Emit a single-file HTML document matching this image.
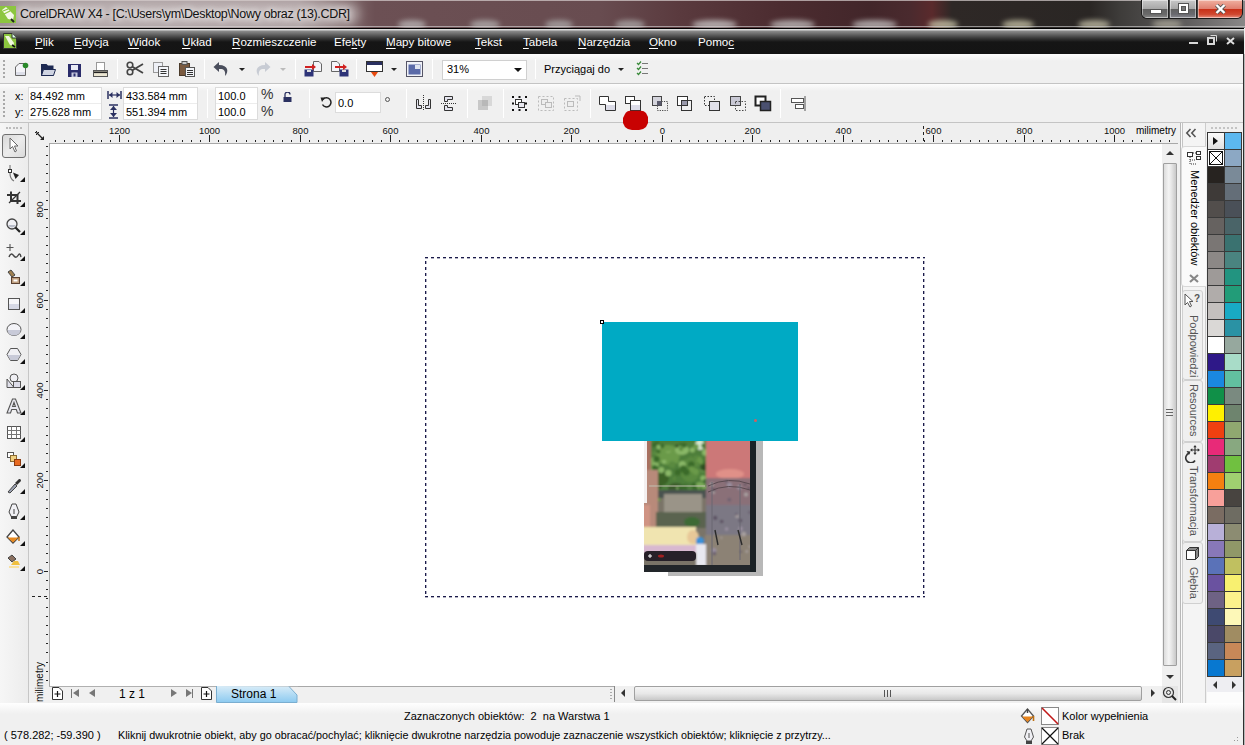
<!DOCTYPE html>
<html><head><meta charset="utf-8">
<style>
*{box-sizing:border-box;margin:0;padding:0}
html,body{width:1245px;height:745px;overflow:hidden;background:#f0f0f0;font-family:"Liberation Sans",sans-serif;color:#000}
.a{position:absolute}
#title{left:0;top:0;width:1245px;height:28px;overflow:hidden;background:linear-gradient(90deg,#9e9294 0px,#aa9ea0 150px,#a89a9c 300px,#806a6c 345px,#6c5054 375px,#684c50 600px,#5a3a3e 680px,#4c2c30 780px,#42262a 870px,#4a2a2e 910px,#5a2a2c 932px,#2e2826 952px,#2a2624 1090px,#3e3c3a 1120px,#5a5858 1180px,#8a8888 1245px)}
#ttext{left:20px;top:7px;font-size:12.5px;letter-spacing:-0.33px;color:#111;white-space:nowrap;text-shadow:0 0 6px #fff,0 0 8px #fff}
#menubar{left:0;top:28px;width:1244px;height:26px;background:linear-gradient(#000 0px,#000 1px,#e0e0e0 1px,#d8d8d8 2px,#8c8c8c 3px,#3a3a3a 10px,#151515 14px,#141414 26px)}
.mi{top:35px;font-size:11.6px;color:#fff;white-space:nowrap}
.mi u{text-decoration:underline;text-underline-offset:2px}
#tb1{left:0;top:54px;width:1243px;height:30px;background:linear-gradient(#fdfdfd,#f0f0f0 7px,#f0f0f0);border-bottom:1px solid #c4c4c4}
#tb2{left:0;top:84px;width:1243px;height:39px;background:linear-gradient(#fdfdfd,#f0f0f0 7px,#f0f0f0);border-bottom:1px solid #c4c4c4}
.sep{width:1px;background:#c8c8c8;border-right:1px solid #fff}
#toolbox{left:0;top:123px;width:29px;height:580px;background:linear-gradient(90deg,#f6f6f6,#f0f0f0 60%,#ececec);border-right:1px solid #c6c6c6}
#rtop{left:29px;top:123px;width:1151px;height:20px;background:#efefef}
#rleft{left:29px;top:143px;width:20px;height:543px;background:#efefef}
#canvas{left:49px;top:143px;width:1113px;height:543px;background:#fff;border-top:1px solid #a8a8a8;border-left:1px solid #a8a8a8}
#vscroll{left:1162px;top:143px;width:16px;height:559px;background:#f0f0f0}
#hnav{left:49px;top:686px;width:1113px;height:17px;background:#f0f0f0;border-top:1px solid #b0b0b0}
#docker{left:1178px;top:123px;width:29px;height:580px;background:linear-gradient(90deg,#f0f0f0 0 2px,#b8b8b8 2px 3px,#fafafa 3px 4px,#c4c4c4 4px 5px,#f4f4f4 5px 27px,#cccccc 27px 28px,#f0f0f0 28px)}
#palette{left:1207px;top:123px;width:36px;height:580px;background:linear-gradient(#f0f0f0 0 553px,#eeeef2 553px 569px,#fcfcfc 569px)}
#status{left:0;top:703px;width:1243px;height:42px;background:linear-gradient(#ffffff,#f8f8f8 5px,#f0f0f0 11px,#f0f0f0)}
#rborder{left:1243px;top:54px;width:2px;height:691px;background:linear-gradient(90deg,#2e2e2e 1px,#b8b8b8 1px)}
.st{font-size:11px;white-space:nowrap;color:#000}
.rt{font-size:10px;white-space:nowrap;color:#000}
</style></head><body>
<div id="title" class="a"><div class="a" style="left:398px;top:20px;width:28px;height:9px;border-radius:50%;background:#b8b4b4;filter:blur(2.5px);opacity:.8"></div><div class="a" style="left:470px;top:20px;width:30px;height:9px;border-radius:50%;background:#b0acac;filter:blur(2.5px);opacity:.8"></div><div class="a" style="left:545px;top:20px;width:28px;height:9px;border-radius:50%;background:#aaa6a6;filter:blur(2.5px);opacity:.8"></div><div class="a" style="left:615px;top:20px;width:30px;height:9px;border-radius:50%;background:#aaa6a6;filter:blur(2.5px);opacity:.8"></div><div class="a" style="left:692px;top:20px;width:45px;height:9px;border-radius:50%;background:#c8c4c4;filter:blur(2.5px);opacity:.8"></div><div class="a" style="left:770px;top:20px;width:45px;height:9px;border-radius:50%;background:#c0bcbc;filter:blur(2.5px);opacity:.8"></div><div class="a" style="left:852px;top:20px;width:45px;height:9px;border-radius:50%;background:#c0bcbc;filter:blur(2.5px);opacity:.8"></div><div class="a" style="left:928px;top:20px;width:30px;height:9px;border-radius:50%;background:#c8c4a8;filter:blur(2.5px);opacity:.8"></div><div class="a" style="left:1002px;top:20px;width:32px;height:9px;border-radius:50%;background:#c4c0a4;filter:blur(2.5px);opacity:.8"></div><div class="a" style="left:1078px;top:20px;width:32px;height:9px;border-radius:50%;background:#c0bca4;filter:blur(2.5px);opacity:.8"></div><div class="a" style="left:1152px;top:20px;width:30px;height:8px;border-radius:50%;background:#b8b4a4;filter:blur(2.5px);opacity:.7"></div><div class="a" style="left:0;top:0;width:1245px;height:1px;background:#d8d0d0;opacity:.7"></div><div class="a" style="left:0;top:26px;width:1245px;height:1px;background:#d8d8d8;opacity:.6"></div><div class="a" style="left:10px;top:2px;width:350px;height:24px;border-radius:12px;background:#cfc6c6;filter:blur(5px);opacity:.55"></div></div>
<div id="ttext" class="a">CorelDRAW X4 - [C:\Users\ym\Desktop\Nowy obraz (13).CDR]</div>
<div id="menubar" class="a"></div>
<div class="a mi" style="left:35px"><u>P</u>lik</div>
<div class="a mi" style="left:74px"><u>E</u>dycja</div>
<div class="a mi" style="left:128px"><u>W</u>idok</div>
<div class="a mi" style="left:182px"><u>U</u>kład</div>
<div class="a mi" style="left:232px"><u>R</u>ozmieszczenie</div>
<div class="a mi" style="left:334px">Efe<u>k</u>ty</div>
<div class="a mi" style="left:386px"><u>M</u>apy bitowe</div>
<div class="a mi" style="left:475px"><u>T</u>ekst</div>
<div class="a mi" style="left:523px"><u>T</u>abela</div>
<div class="a mi" style="left:578px"><u>N</u>arzędzia</div>
<div class="a mi" style="left:649px"><u>O</u>kno</div>
<div class="a mi" style="left:698px">Pomo<u>c</u></div>
<!-- title icon -->
<svg class="a" style="left:0;top:5px" width="17" height="19" viewBox="0 0 17 19">
<rect x="0" y="1" width="16" height="17" fill="#8cc63f"/>
<path d="M2 5 L6 2 L14 10 L13 15 L8 14 Z" fill="#f4f8e8"/>
<path d="M3 6 L8 4 M4 9 L10 6" stroke="#8cc63f" stroke-width="1.3"/>
<path d="M11 14 L14 17" stroke="#222" stroke-width="2"/>
</svg>
<!-- caption buttons -->
<div class="a" style="left:1141px;top:0;width:102px;height:19px;border:1px solid #1a1a1a;border-top:none;border-radius:0 0 6px 6px;overflow:hidden;background:#444">
 <div class="a" style="left:0;top:0;width:27px;height:18px;background:linear-gradient(#c8c8c8,#a8a8a8 48%,#606060 52%,#6a6a6a 80%,#8a8a8a);border-right:1px solid #222;box-shadow:inset 0 0 0 1px rgba(255,255,255,.45)"></div>
 <div class="a" style="left:28px;top:0;width:27px;height:18px;background:linear-gradient(#c8c8c8,#a8a8a8 48%,#606060 52%,#6a6a70 80%,#8a8a90);border-right:1px solid #222;box-shadow:inset 0 0 0 1px rgba(255,255,255,.45)"></div>
 <div class="a" style="left:56px;top:0;width:46px;height:18px;background:linear-gradient(#f0b0a0,#e08070 48%,#c83018 52%,#d04830 80%,#e89080);box-shadow:inset 0 0 0 1px rgba(255,255,255,.45)"></div>
 <div class="a" style="left:9px;top:10px;width:10px;height:3px;background:#fff;box-shadow:0 0 0 1px #555"></div>
 <div class="a" style="left:37px;top:4px;width:9px;height:9px;border:2px solid #fff;box-shadow:0 0 0 1px #555,inset 0 0 0 1px #555;background:#777"></div>
 <svg class="a" style="left:73px;top:4px" width="11" height="10" viewBox="0 0 11 10"><path d="M1.5 1 L9.5 9 M9.5 1 L1.5 9" stroke="#555" stroke-width="4"/><path d="M1.5 1 L9.5 9 M9.5 1 L1.5 9" stroke="#fff" stroke-width="2.4"/></svg>
</div>
<!-- menubar icon -->
<svg class="a" style="left:3px;top:33px" width="14" height="16" viewBox="0 0 14 16">
<path d="M0.5 0.5 H9 L13.5 5 V15.5 H0.5 Z" fill="#8cc63f" stroke="#333" stroke-width="1"/>
<path d="M9 0.5 V5 H13.5" fill="#dfe" stroke="#333" stroke-width="1"/>
<path d="M2 3 L6 3 L11 10 L10 13 L7 12 Z" fill="#f0f8e0"/>
<path d="M9 12 L12 14" stroke="#111" stroke-width="1.6"/>
</svg>
<!-- MDI buttons -->
<div class="a" style="left:1189px;top:42px;width:9px;height:2px;background:#d8d8d8"></div>
<svg class="a" style="left:1207px;top:35px" width="10" height="10" viewBox="0 0 10 10"><rect x="1" y="3" width="6" height="6" fill="none" stroke="#d8d8d8" stroke-width="2"/><path d="M3.5 0.5 H9.5 V6.5" fill="none" stroke="#d8d8d8" stroke-width="1"/></svg>
<svg class="a" style="left:1226px;top:37px" width="9" height="8" viewBox="0 0 9 8"><path d="M1 1 L8 7 M8 1 L1 7" stroke="#e0e0e0" stroke-width="2"/></svg>
<div id="tb1" class="a"></div>
<div id="tb2" class="a"></div>
<!-- toolbar 1 -->
<div class="a" style="left:3px;top:60px;width:2px;height:19px;background:repeating-linear-gradient(#a8a8a8 0 2px,transparent 2px 4px)"></div>
<svg class="a" style="left:14px;top:62px" width="16" height="15" viewBox="0 0 16 15">
<path d="M1.5 5 L5 1.5 H11.5 V13.5 H1.5 Z" fill="#f4f4f8" stroke="#666" stroke-width="1"/>
<path d="M2 10 H11 V13 H2 Z" fill="#dcdee8"/>
<circle cx="11.5" cy="3.5" r="2.8" fill="#2a8a2a"/>
</svg>
<svg class="a" style="left:41px;top:63px" width="15" height="14" viewBox="0 0 15 14">
<path d="M0 1 H5.5 L7 2.5 H12.5 V13 H0 Z" fill="#1e2a52"/>
<path d="M2.5 6.5 H14.5 L12.5 12.5 H0.5 Z" fill="#cfd4e2" stroke="#1e2a52" stroke-width="1"/>
</svg>
<svg class="a" style="left:68px;top:64px" width="13" height="13" viewBox="0 0 13 13">
<rect x="0" y="0" width="13" height="13" fill="#2a2c6a"/>
<rect x="3" y="1" width="7" height="5" fill="#e8eaf4"/>
<rect x="3.5" y="8.5" width="6" height="4.5" fill="#c8cae0"/>
<rect x="5.5" y="9.5" width="2" height="3" fill="#2a2c6a"/>
</svg>
<svg class="a" style="left:93px;top:62px" width="15" height="15" viewBox="0 0 15 15">
<rect x="3.5" y="0.5" width="8" height="8" fill="#fff" stroke="#999"/>
<rect x="0.5" y="8.5" width="14" height="6" fill="#ebe6d2" stroke="#555"/>
<rect x="1" y="9.5" width="13" height="1.6" fill="#222"/>
</svg>
<div class="a sep" style="left:117px;top:59px;height:20px"></div>
<svg class="a" style="left:126px;top:61px" width="18" height="15" viewBox="0 0 18 15">
<circle cx="4" cy="4" r="2.8" fill="none" stroke="#444" stroke-width="1.6"/>
<circle cx="4" cy="11" r="2.8" fill="none" stroke="#444" stroke-width="1.6"/>
<path d="M6 5.5 L17 12 M6 9.5 L17 3" stroke="#444" stroke-width="1.8"/>
</svg>
<svg class="a" style="left:153px;top:62px" width="16" height="15" viewBox="0 0 16 15">
<rect x="0.5" y="0.5" width="9" height="10" fill="#eef0f6" stroke="#999"/>
<rect x="5.5" y="4.5" width="10" height="10" fill="#f4f6fa" stroke="#666"/>
<path d="M7.5 7.5 H13.5 M7.5 9.5 H13.5 M7.5 11.5 H13.5" stroke="#333" stroke-width="1"/>
</svg>
<svg class="a" style="left:179px;top:61px" width="16" height="16" viewBox="0 0 16 16">
<rect x="0.5" y="2.5" width="10" height="12" fill="#7a5a40" stroke="#4a3a2a"/>
<rect x="3" y="0.5" width="5" height="3" fill="#ccc" stroke="#555"/>
<rect x="6.5" y="6.5" width="9" height="9" fill="#f4f6fa" stroke="#555"/>
<path d="M8 9.5 H14 M8 11.5 H14 M8 13.5 H14" stroke="#333" stroke-width="1"/>
</svg>
<div class="a sep" style="left:204px;top:59px;height:20px"></div>
<svg class="a" style="left:213px;top:61px" width="17" height="16" viewBox="0 0 17 16">
<path d="M6 1 L0.5 6 L6 11 V8 C10 7.5 13 9 12 15 C16 11 15.5 4 6 4 Z" fill="#4a4e5c"/>
</svg>
<div class="a" style="left:239px;top:68px;width:0;height:0;border-left:3px solid transparent;border-right:3px solid transparent;border-top:3px solid #222"></div>
<svg class="a" style="left:254px;top:61px" width="17" height="16" viewBox="0 0 17 16">
<path d="M11 1 L16.5 6 L11 11 V8 C7 7.5 4 9 5 15 C1 11 1.5 4 11 4 Z" fill="#c8ccd4"/>
</svg>
<div class="a" style="left:280px;top:68px;width:0;height:0;border-left:3px solid transparent;border-right:3px solid transparent;border-top:3px solid #bbb"></div>
<div class="a sep" style="left:295px;top:59px;height:20px"></div>
<svg class="a" style="left:304px;top:61px" width="18" height="16" viewBox="0 0 18 16">
<path d="M9.5 0.5 H15 L17.5 3 V10.5 H9.5 Z" fill="#f4f4f8" stroke="#666"/>
<rect x="0.5" y="8.5" width="9" height="7" fill="#2e3478"/>
<rect x="3" y="9" width="4" height="2" fill="#ddd"/>
<path d="M1 6 H10" stroke="#d02020" stroke-width="2"/><path d="M8 3 L12 6 L8 9 Z" fill="#d02020"/>
</svg>
<svg class="a" style="left:331px;top:61px" width="18" height="16" viewBox="0 0 18 16">
<path d="M0.5 0.5 H6 L8.5 3 V10.5 H0.5 Z" fill="#f4f4f8" stroke="#666"/>
<rect x="8.5" y="8.5" width="9" height="7" fill="#2e3478"/>
<rect x="11" y="9" width="4" height="2" fill="#ddd"/>
<path d="M4 6 H14" stroke="#d02020" stroke-width="2"/><path d="M12 3 L16 6 L12 9 Z" fill="#d02020"/>
</svg>
<div class="a sep" style="left:356px;top:59px;height:20px"></div>
<svg class="a" style="left:366px;top:61px" width="17" height="16" viewBox="0 0 17 16">
<rect x="0.5" y="0.5" width="16" height="10" fill="#fff" stroke="#333"/>
<rect x="1" y="1" width="15" height="3" fill="#2a3060"/>
<path d="M5 11 L8.5 16 L12 11 Z" fill="#e84a10"/>
</svg>
<div class="a" style="left:391px;top:68px;width:0;height:0;border-left:3px solid transparent;border-right:3px solid transparent;border-top:3px solid #222"></div>
<svg class="a" style="left:406px;top:61px" width="17" height="16" viewBox="0 0 17 16">
<rect x="0.5" y="0.5" width="16" height="15" fill="#f0f2f8" stroke="#556"/>
<rect x="2.5" y="3.5" width="12" height="10" fill="#5a6aa8"/>
<rect x="9" y="4" width="5" height="4" fill="#dfe4f0"/>
</svg>
<div class="a sep" style="left:432px;top:59px;height:20px"></div>
<div class="a" style="left:442px;top:60px;width:85px;height:20px;background:#fff;border:1px solid #d0d0d0"></div>
<div class="a st" style="left:447px;top:63px;font-size:11px">31%</div>
<div class="a" style="left:514px;top:68px;width:0;height:0;border-left:4px solid transparent;border-right:4px solid transparent;border-top:4px solid #111"></div>
<div class="a sep" style="left:535px;top:59px;height:20px"></div>
<div class="a st" style="left:544px;top:63px">Przyciągaj do</div>
<div class="a" style="left:618px;top:68px;width:0;height:0;border-left:3px solid transparent;border-right:3px solid transparent;border-top:3px solid #222"></div>
<svg class="a" style="left:636px;top:61px" width="13" height="15" viewBox="0 0 13 15">
<path d="M1 2 L2.5 3.5 L5 0.5 M1 7 L2.5 8.5 L5 5.5 M1 12 L2.5 13.5 L5 10.5" stroke="#3a8a3a" stroke-width="1.2" fill="none"/>
<path d="M6 2.5 H12 M6 7.5 H12 M6 12.5 H12" stroke="#777" stroke-width="1"/>
</svg>


<!-- property bar -->
<div class="a" style="left:3px;top:91px;width:2px;height:26px;background:repeating-linear-gradient(#a8a8a8 0 2px,transparent 2px 4px)"></div>
<div class="a st" style="left:15px;top:90px">x:</div>
<div class="a st" style="left:15px;top:106px">y:</div>
<div class="a" style="left:28px;top:87px;width:74px;height:33px;background:#fff;border:1px solid #dcdcdc"></div>
<div class="a" style="left:29px;top:103px;width:72px;height:1px;background:#ececec"></div>
<div class="a st" style="left:30px;top:90px">84.492 mm</div>
<div class="a st" style="left:30px;top:106px">275.628 mm</div>
<svg class="a" style="left:107px;top:90px" width="15" height="10" viewBox="0 0 15 10">
<path d="M1 1 V9 M14 1 V9" stroke="#2a3060" stroke-width="1.5"/>
<path d="M2 5 H13" stroke="#2a3060" stroke-width="1.2"/>
<path d="M2 5 L5.5 2 V8 Z M13 5 L9.5 2 V8 Z" fill="#2a3060"/>
</svg>
<svg class="a" style="left:108px;top:104px" width="11" height="15" viewBox="0 0 11 15">
<path d="M1 1 H10 M1 14 H10" stroke="#2a3060" stroke-width="1.5"/>
<path d="M5.5 2 V13" stroke="#2a3060" stroke-width="1.2"/>
<path d="M5.5 2 L2 6 H9 Z M5.5 13 L2 9 H9 Z" fill="#2a3060"/>
</svg>
<div class="a" style="left:123px;top:87px;width:75px;height:33px;background:#fff;border:1px solid #dcdcdc"></div>
<div class="a" style="left:124px;top:103px;width:73px;height:1px;background:#ececec"></div>
<div class="a st" style="left:126px;top:90px">433.584 mm</div>
<div class="a st" style="left:126px;top:106px">551.394 mm</div>
<div class="a sep" style="left:207px;top:89px;height:29px"></div>
<div class="a" style="left:215px;top:87px;width:43px;height:33px;background:#fff;border:1px solid #dcdcdc"></div>
<div class="a" style="left:216px;top:103px;width:41px;height:1px;background:#ececec"></div>
<div class="a st" style="left:218px;top:90px">100.0</div>
<div class="a st" style="left:218px;top:106px">100.0</div>
<div class="a st" style="left:261px;top:86px;font-size:14px;color:#333">%</div>
<div class="a st" style="left:261px;top:103px;font-size:14px;color:#333">%</div>
<svg class="a" style="left:283px;top:92px" width="9" height="10" viewBox="0 0 9 10">
<path d="M2 5 V2.5 A2.5 2.5 0 0 1 7 2.5" fill="none" stroke="#2a3060" stroke-width="1.3"/>
<rect x="0.5" y="5" width="8" height="5" fill="#2a3060"/>
</svg>
<div class="a sep" style="left:309px;top:89px;height:29px"></div>
<svg class="a" style="left:320px;top:96px" width="12" height="12" viewBox="0 0 12 12">
<path d="M3 3.5 A4.5 4.5 0 1 1 2.5 8.5" fill="none" stroke="#222" stroke-width="1.5"/>
<path d="M0.5 1.5 L5 1.5 L2 6 Z" fill="#222"/>
</svg>
<div class="a" style="left:335px;top:92px;width:46px;height:21px;background:#fff;border:1px solid #dcdcdc"></div>
<div class="a st" style="left:338px;top:97px">0.0</div>
<div class="a" style="left:385px;top:97px;width:5px;height:5px;border:1px solid #555;border-radius:50%"></div>
<div class="a sep" style="left:406px;top:89px;height:29px"></div>
<svg class="a" style="left:415px;top:95px" width="17" height="16" viewBox="0 0 17 16">
<path d="M8.5 0 V16" stroke="#333" stroke-width="1" stroke-dasharray="1 1"/>
<path d="M1.5 4.5 H3.5 V10.5 H6.5 V13.5 H1.5 Z" fill="#e4e4ee" stroke="#333"/>
<path d="M15.5 4.5 H13.5 V10.5 H10.5 V13.5 H15.5 Z" fill="#e4e4ee" stroke="#333"/>
</svg>
<svg class="a" style="left:441px;top:95px" width="17" height="16" viewBox="0 0 17 16">
<path d="M0 8.5 H16" stroke="#333" stroke-width="1" stroke-dasharray="1 1"/>
<path d="M3.5 1.5 H11.5 V4.5 H6.5 V6.5 H3.5 Z" fill="#e4e4ee" stroke="#333"/>
<path d="M3.5 15.5 H11.5 V12.5 H6.5 V10.5 H3.5 Z" fill="#e4e4ee" stroke="#333"/>
</svg>
<div class="a sep" style="left:467px;top:89px;height:29px"></div>
<svg class="a" style="left:477px;top:95px" width="16" height="16" viewBox="0 0 16 16">
<rect x="1" y="5" width="10" height="10" fill="#c8c8c8"/>
<rect x="5" y="1" width="10" height="10" fill="#d8d8d8"/>
<rect x="5" y="5" width="6" height="6" fill="#b8b8b8"/>
</svg>
<div class="a sep" style="left:503px;top:89px;height:29px"></div>
<svg class="a" style="left:511px;top:95px" width="18" height="17" viewBox="0 0 18 17">
<rect x="1.5" y="1.5" width="14" height="14" fill="#f4f4f8" opacity=".6"/>
<path d="M1 1 h2 v2 h-2z M7.5 1 h2 v2 h-2z M14 1 h2 v2 h-2z M1 7.5 h2 v2 h-2z M14 7.5 h2 v2 h-2z M1 14 h2 v2 h-2z M7.5 14 h2 v2 h-2z M14 14 h2 v2 h-2z" fill="#111"/>
<rect x="4.5" y="4.5" width="6" height="5" fill="#fff" stroke="#333"/>
<rect x="7.5" y="7.5" width="6" height="5" fill="#e8e8f0" stroke="#333"/>
</svg>
<svg class="a" style="left:537px;top:95px" width="18" height="17" viewBox="0 0 18 17">
<rect x="1.5" y="1.5" width="15" height="14" fill="none" stroke="#bbb" stroke-dasharray="2 2"/>
<rect x="4.5" y="4.5" width="6" height="5" fill="#eee" stroke="#bbb"/>
<rect x="8.5" y="7.5" width="6" height="5" fill="#eee" stroke="#bbb"/>
</svg>
<svg class="a" style="left:563px;top:95px" width="18" height="17" viewBox="0 0 18 17">
<rect x="1.5" y="3.5" width="13" height="12" fill="none" stroke="#bbb" stroke-dasharray="2 2"/>
<rect x="4.5" y="6.5" width="6" height="5" fill="#eee" stroke="#bbb"/>
<path d="M12 1 L17 1 L17 6" fill="none" stroke="#bbb"/>
</svg>
<div class="a sep" style="left:590px;top:89px;height:29px"></div>
<svg class="a" style="left:598px;top:95px" width="19" height="17" viewBox="0 0 19 17">
<path d="M1.5 1.5 H10.5 V6.5 H17.5 V15.5 H7.5 V9.5 H1.5 Z" fill="#fff" stroke="#333"/>
<rect x="8" y="10" width="9" height="5" fill="#dcdce8"/>
</svg>
<svg class="a" style="left:624px;top:95px" width="18" height="17" viewBox="0 0 18 17">
<rect x="1.5" y="1.5" width="9" height="7" fill="#fff" stroke="#333"/>
<rect x="6.5" y="5.5" width="10" height="10" fill="#fff" stroke="#333"/>
<rect x="7" y="10" width="9" height="5" fill="#dcdce8"/>
</svg>
<svg class="a" style="left:651px;top:95px" width="18" height="17" viewBox="0 0 18 17">
<path d="M10.5 6.5 H16.5 V15.5 H6.5 V10.5" fill="none" stroke="#444" stroke-dasharray="1.2 1.2"/>
<rect x="1.5" y="1.5" width="9" height="9" fill="#d4d4dc" stroke="#444"/>
<rect x="6" y="6" width="4.5" height="4.5" fill="#5a5a6c"/>
</svg>
<svg class="a" style="left:676px;top:95px" width="18" height="17" viewBox="0 0 18 17">
<rect x="1.5" y="1.5" width="10" height="9" fill="#fff" stroke="#333"/>
<rect x="5.5" y="5.5" width="10" height="10" fill="none" stroke="#333"/>
<rect x="6" y="6" width="5" height="4" fill="#99a"/>
</svg>
<svg class="a" style="left:703px;top:95px" width="18" height="17" viewBox="0 0 18 17">
<rect x="1.5" y="1.5" width="10" height="9" fill="none" stroke="#333" stroke-dasharray="1.5 1.5"/>
<rect x="6.5" y="6.5" width="10" height="9" fill="#e0e0ea" stroke="#333"/>
</svg>
<svg class="a" style="left:729px;top:95px" width="18" height="17" viewBox="0 0 18 17">
<rect x="1.5" y="1.5" width="10" height="9" fill="#c8c8d4" stroke="#444"/>
<rect x="6.5" y="6.5" width="10" height="9" fill="none" stroke="#444" stroke-dasharray="1.5 1.5"/>
</svg>
<svg class="a" style="left:754px;top:95px" width="18" height="17" viewBox="0 0 18 17">
<rect x="1.5" y="1.5" width="10" height="9" fill="#fff" stroke="#222" stroke-width="2"/>
<rect x="6.5" y="6.5" width="10" height="9" fill="#4a5070" stroke="#222" stroke-width="1.5"/>
</svg>
<div class="a sep" style="left:780px;top:89px;height:29px"></div>
<svg class="a" style="left:790px;top:96px" width="16" height="15" viewBox="0 0 16 15">
<path d="M15 0 V15" stroke="#555"/>
<rect x="1.5" y="2.5" width="12" height="4" fill="#fff" stroke="#555"/>
<rect x="5.5" y="8.5" width="8" height="4" fill="#fff" stroke="#555"/>
</svg>


<div id="toolbox" class="a"></div>
<div class="a" style="left:6px;top:127px;width:17px;height:2px;background:repeating-linear-gradient(90deg,#bcbcbc 0 2px,transparent 2px 3.5px)"></div>
<div class="a" style="left:2px;top:134px;width:24px;height:24px;border:1px solid #707070;border-radius:3px;background:linear-gradient(135deg,#d8d8d8,#ececec 50%,#dadada)"></div>
<svg class="a" style="left:9px;top:137px" width="10" height="16" viewBox="0 0 10 16"><path d="M1 1 V12 L3.5 9.5 L6 15 L7.5 14 L5.5 9 H9 Z" fill="#fff" stroke="#666" stroke-width="1"/></svg>
<svg class="a" style="left:6px;top:165px" width="16" height="17" viewBox="0 0 16 17"><path d="M4 0 V4" stroke="#666" stroke-width="1"/><rect x="2.5" y="4.5" width="3" height="3" fill="#fff" stroke="#333"/><path d="M4 8 Q4 14 8 16" fill="none" stroke="#777" stroke-width="1.2"/><path d="M7 7.5 L13 10 L9.5 14 Z" fill="#222"/></svg>
<div class="a" style="left:20px;top:177px;width:0;height:0;border-left:5px solid transparent;border-bottom:5px solid #111"></div>
<svg class="a" style="left:6px;top:190px" width="16" height="17" viewBox="0 0 16 17"><path d="M1 5 H11.5 V14 M5 1.5 V11 H15" fill="none" stroke="#333" stroke-width="2"/><path d="M3 13 L14 2" stroke="#333" stroke-width="1.3"/></svg>
<div class="a" style="left:20px;top:202px;width:0;height:0;border-left:5px solid transparent;border-bottom:5px solid #111"></div>
<svg class="a" style="left:6px;top:218px" width="16" height="17" viewBox="0 0 16 17"><circle cx="6" cy="6" r="5" fill="#f0f0f4" stroke="#444" stroke-width="1.3"/><path d="M2 7 A4.5 4.5 0 0 0 10 7 Z" fill="#b8bcc8"/><path d="M9.5 9.5 L14 14" stroke="#222" stroke-width="2.2"/></svg>
<div class="a" style="left:20px;top:230px;width:0;height:0;border-left:5px solid transparent;border-bottom:5px solid #111"></div>
<svg class="a" style="left:6px;top:244px" width="16" height="17" viewBox="0 0 16 17"><path d="M4 0 V7 M0.5 3.5 H7.5" stroke="#555" stroke-width="1.1"/><path d="M3 13 Q5 8 7.5 11.5 T12 11.5 T15 13" fill="none" stroke="#444" stroke-width="1.4"/></svg>
<div class="a" style="left:20px;top:256px;width:0;height:0;border-left:5px solid transparent;border-bottom:5px solid #111"></div>
<svg class="a" style="left:6px;top:269px" width="16" height="17" viewBox="0 0 16 17"><path d="M2 3 L5 1 L9 6 L6 8 Z" fill="#a08050" stroke="#444"/><rect x="5.5" y="8.5" width="8" height="6" fill="#c0a080" stroke="#5a4030"/><rect x="7.5" y="10.5" width="4" height="2" fill="#fff"/></svg>
<div class="a" style="left:20px;top:281px;width:0;height:0;border-left:5px solid transparent;border-bottom:5px solid #111"></div>
<svg class="a" style="left:6px;top:296px" width="16" height="17" viewBox="0 0 16 17"><rect x="2.5" y="2.5" width="11" height="11" fill="#f6f6f8" stroke="#555"/><rect x="3" y="8" width="10" height="5" fill="#d6d8e4"/></svg>
<div class="a" style="left:20px;top:308px;width:0;height:0;border-left:5px solid transparent;border-bottom:5px solid #111"></div>
<svg class="a" style="left:6px;top:322px" width="16" height="17" viewBox="0 0 16 17"><ellipse cx="8" cy="7.5" rx="7" ry="6" fill="#f4f4f8" stroke="#555"/><path d="M1.5 8 A6.5 5.5 0 0 0 14.5 8 Z" fill="#c8cad8"/></svg>
<div class="a" style="left:20px;top:334px;width:0;height:0;border-left:5px solid transparent;border-bottom:5px solid #111"></div>
<svg class="a" style="left:6px;top:347px" width="16" height="17" viewBox="0 0 16 17"><path d="M4.5 1.5 H11.5 L15 7.5 L11.5 13.5 H4.5 L1 7.5 Z" fill="#f0f0f4" stroke="#555"/><path d="M1.5 8 L4.5 13 H11.5 L14.5 8 Z" fill="#c8cad8"/></svg>
<div class="a" style="left:20px;top:359px;width:0;height:0;border-left:5px solid transparent;border-bottom:5px solid #111"></div>
<svg class="a" style="left:6px;top:373px" width="16" height="17" viewBox="0 0 16 17"><circle cx="8" cy="5" r="4" fill="#f0f0f4" stroke="#555"/><path d="M1 14.5 V6 L8 14.5 Z" fill="#e0e0ea" stroke="#555"/><rect x="7.5" y="8.5" width="7" height="6" fill="#dcdce8" stroke="#555"/></svg>
<div class="a" style="left:20px;top:385px;width:0;height:0;border-left:5px solid transparent;border-bottom:5px solid #111"></div>
<svg class="a" style="left:6px;top:398px" width="16" height="17" viewBox="0 0 16 17"><path d="M1 15 L6.5 1 H9.5 L15 15 H11.5 L10.3 11.5 H5.7 L4.5 15 Z M6.6 8.5 H9.4 L8 4.5 Z" fill="#e8e8f0" stroke="#555" stroke-width="1.1"/></svg>
<div class="a" style="left:20px;top:410px;width:0;height:0;border-left:5px solid transparent;border-bottom:5px solid #111"></div>
<svg class="a" style="left:6px;top:425px" width="16" height="17" viewBox="0 0 16 17"><rect x="1.5" y="1.5" width="13" height="12" fill="#fff" stroke="#555"/><path d="M1.5 5.5 H14.5 M1.5 9.5 H14.5 M5.5 1.5 V13.5 M10.5 1.5 V13.5" stroke="#777"/></svg>
<div class="a" style="left:20px;top:437px;width:0;height:0;border-left:5px solid transparent;border-bottom:5px solid #111"></div>
<svg class="a" style="left:6px;top:451px" width="16" height="17" viewBox="0 0 16 17"><rect x="1.5" y="1.5" width="6" height="5" fill="#fff" stroke="#555"/><rect x="4.5" y="4.5" width="6" height="6" fill="#f0d080" stroke="#8a6a30"/><rect x="8.5" y="8.5" width="6" height="6" fill="#e86a20" stroke="#8a3a10"/></svg>
<div class="a" style="left:20px;top:463px;width:0;height:0;border-left:5px solid transparent;border-bottom:5px solid #111"></div>
<svg class="a" style="left:6px;top:477px" width="16" height="17" viewBox="0 0 16 17"><path d="M2 15 L9 7 L11 9 L4 16 Z" fill="#9aa0b0" stroke="#444"/><path d="M9 6 L13 2 A1.8 1.8 0 0 1 15 4 L11 8 Z" fill="#333"/></svg>
<div class="a" style="left:20px;top:489px;width:0;height:0;border-left:5px solid transparent;border-bottom:5px solid #111"></div>
<svg class="a" style="left:6px;top:503px" width="16" height="17" viewBox="0 0 16 17"><path d="M6 1 H10 L13 9 L10 15 H6 L3 9 Z" fill="#f0f0f4" stroke="#444"/><path d="M8 6 V11" stroke="#444"/><rect x="5" y="13" width="6" height="3" fill="#444"/></svg>
<div class="a" style="left:20px;top:515px;width:0;height:0;border-left:5px solid transparent;border-bottom:5px solid #111"></div>
<svg class="a" style="left:6px;top:529px" width="16" height="17" viewBox="0 0 16 17"><path d="M7 1 L1 8 L7 14 L13 8 Z" fill="#fff" stroke="#444" stroke-width="1.3"/><path d="M1.5 8.5 L7 13.5 L12.5 8.5 Z" fill="#e88a20"/><path d="M13 8 V12" stroke="#c07010" stroke-width="1.5"/></svg>
<div class="a" style="left:20px;top:541px;width:0;height:0;border-left:5px solid transparent;border-bottom:5px solid #111"></div>
<svg class="a" style="left:6px;top:554px" width="16" height="17" viewBox="0 0 16 17"><path d="M2 4 L6 1 L10 5 L6 8 Z" fill="#8a7060" stroke="#444"/><path d="M5 11 H14 L12 7 H8 Z" fill="#f0c040"/><path d="M3 13 H13" stroke="#f8e0a0" stroke-width="2"/></svg>
<div class="a" style="left:20px;top:566px;width:0;height:0;border-left:5px solid transparent;border-bottom:5px solid #111"></div>
<div id="rtop" class="a"></div>
<div id="rleft" class="a"></div>
<div id="canvas" class="a"></div>
<div class="a" style="left:425px;top:257px;width:500px;height:1px;background:repeating-linear-gradient(90deg,#1a1a4a 0 3px,transparent 3px 6px);opacity:1"></div>
<div class="a" style="left:425px;top:258px;width:500px;height:1px;background:repeating-linear-gradient(90deg,#1a1a4a 0 3px,transparent 3px 6px);opacity:0.35"></div>
<div class="a" style="left:425px;top:596px;width:500px;height:1px;background:repeating-linear-gradient(90deg,#1a1a4a 0 3px,transparent 3px 6px);opacity:1"></div>
<div class="a" style="left:425px;top:597px;width:500px;height:1px;background:repeating-linear-gradient(90deg,#1a1a4a 0 3px,transparent 3px 6px);opacity:0.35"></div>
<div class="a" style="left:425px;top:261px;width:1px;height:336px;background:repeating-linear-gradient(#1a1a4a 0 3px,transparent 3px 6px);opacity:1"></div>
<div class="a" style="left:426px;top:261px;width:1px;height:336px;background:repeating-linear-gradient(#1a1a4a 0 3px,transparent 3px 6px);opacity:0.35"></div>
<div class="a" style="left:923px;top:261px;width:1px;height:336px;background:repeating-linear-gradient(#1a1a4a 0 3px,transparent 3px 6px);opacity:1"></div>
<div class="a" style="left:924px;top:261px;width:1px;height:336px;background:repeating-linear-gradient(#1a1a4a 0 3px,transparent 3px 6px);opacity:0.35"></div>
<div class="a" style="left:668px;top:441px;width:95px;height:135px;background:#b8b8b8"></div>
<svg class="a" style="left:644px;top:441px" width="112" height="131" viewBox="644 441 112 131">
<defs><filter id="bl" x="-5%" y="-5%" width="110%" height="110%"><feGaussianBlur stdDeviation="1.0"/></filter>
<filter id="bl2"><feGaussianBlur stdDeviation="0.6"/></filter>
<clipPath id="pc"><rect x="644" y="441" width="112" height="131"/></clipPath></defs>
<g clip-path="url(#pc)">
<rect x="644" y="441" width="112" height="131" fill="#7a7468"/>
<g filter="url(#bl)">
<rect x="640" y="436" width="68" height="62" fill="#4e7e3a"/>
<ellipse cx="668" cy="455" rx="12" ry="10" fill="#6a9a48"/>
<ellipse cx="690" cy="470" rx="10" ry="12" fill="#5a8a40"/>
<ellipse cx="660" cy="478" rx="9" ry="8" fill="#3a6228"/>
<ellipse cx="682" cy="450" rx="7" ry="5" fill="#8ab868"/>
<ellipse cx="700" cy="488" rx="6" ry="6" fill="#7aaa58"/>
<ellipse cx="676" cy="488" rx="8" ry="5" fill="#3a5a2a"/>
<ellipse cx="700" cy="445" rx="5" ry="5" fill="#d8e8d0"/>
<ellipse cx="654" cy="465" rx="5" ry="8" fill="#7aa858"/>
<circle cx="668.1" cy="449.9" r="2.8" fill="#8ab868"/><circle cx="696.0" cy="446.6" r="2.7" fill="#6a9a48"/><circle cx="662.0" cy="446.1" r="2.3" fill="#3a6a2a"/><circle cx="655.1" cy="466.0" r="3.2" fill="#8ab868"/><circle cx="703.1" cy="478.2" r="2.7" fill="#8ab868"/><circle cx="682.3" cy="464.4" r="3.5" fill="#8ab868"/><circle cx="681.2" cy="448.9" r="2.3" fill="#6a9a48"/><circle cx="656.6" cy="459.2" r="3.1" fill="#3a6a2a"/><circle cx="655.8" cy="474.7" r="1.9" fill="#8ab868"/><circle cx="680.7" cy="444.7" r="1.6" fill="#3a6a2a"/><circle cx="677.8" cy="472.4" r="3.1" fill="#3a6a2a"/><circle cx="682.8" cy="467.7" r="2.1" fill="#4a7a38"/><circle cx="660.1" cy="487.0" r="1.7" fill="#2e5020"/><circle cx="679.4" cy="492.6" r="3.0" fill="#2e5020"/><circle cx="684.1" cy="445.3" r="2.5" fill="#3a6a2a"/><circle cx="692.4" cy="450.0" r="2.5" fill="#8ab868"/><circle cx="703.9" cy="445.6" r="2.6" fill="#4a7a38"/><circle cx="699.0" cy="459.5" r="2.9" fill="#6a9a48"/><circle cx="677.8" cy="488.0" r="1.6" fill="#8ab868"/><circle cx="702.9" cy="469.0" r="2.8" fill="#8ab868"/><circle cx="690.9" cy="459.3" r="2.7" fill="#5a8a40"/><circle cx="696.0" cy="457.8" r="2.3" fill="#5a8a40"/><circle cx="669.4" cy="496.5" r="2.2" fill="#6a9a48"/><circle cx="656.6" cy="444.5" r="3.0" fill="#3a6a2a"/><circle cx="691.3" cy="464.5" r="3.3" fill="#3a6a2a"/><circle cx="654.5" cy="467.5" r="2.6" fill="#3a6a2a"/><circle cx="695.9" cy="492.0" r="2.1" fill="#3a6a2a"/><circle cx="705.2" cy="481.3" r="2.3" fill="#3a6a2a"/><circle cx="658.5" cy="451.4" r="2.0" fill="#3a6a2a"/><circle cx="650.7" cy="490.0" r="1.9" fill="#2e5020"/><circle cx="650.2" cy="465.7" r="2.2" fill="#6a9a48"/><circle cx="667.8" cy="448.4" r="3.2" fill="#6a9a48"/><circle cx="686.7" cy="484.6" r="2.4" fill="#4a7a38"/><circle cx="693.7" cy="492.6" r="3.1" fill="#3a6a2a"/><circle cx="672.3" cy="464.3" r="2.5" fill="#3a6a2a"/><circle cx="653.5" cy="445.0" r="1.9" fill="#3a6a2a"/><circle cx="656.2" cy="476.4" r="1.7" fill="#6a9a48"/><circle cx="658.5" cy="447.0" r="2.2" fill="#8ab868"/><circle cx="653.9" cy="453.3" r="2.3" fill="#5a8a40"/><circle cx="664.1" cy="461.5" r="2.2" fill="#8ab868"/><circle cx="656.5" cy="469.8" r="3.5" fill="#3a6a2a"/><circle cx="677.1" cy="446.1" r="1.7" fill="#2e5020"/><circle cx="691.5" cy="469.2" r="2.9" fill="#6a9a48"/><circle cx="651.3" cy="497.1" r="2.6" fill="#3a6a2a"/><circle cx="688.6" cy="494.9" r="3.0" fill="#2e5020"/><circle cx="704.8" cy="491.9" r="2.9" fill="#2e5020"/><circle cx="679.0" cy="494.6" r="2.2" fill="#3a6a2a"/><circle cx="679.8" cy="487.0" r="2.2" fill="#3a6a2a"/><circle cx="684.3" cy="487.5" r="3.0" fill="#3a6a2a"/><circle cx="695.1" cy="489.3" r="3.0" fill="#3a6a2a"/><circle cx="661.2" cy="470.1" r="3.0" fill="#8ab868"/><circle cx="694.2" cy="468.9" r="1.9" fill="#6a9a48"/><circle cx="703.6" cy="467.4" r="3.4" fill="#2e5020"/><circle cx="703.5" cy="462.5" r="1.9" fill="#3a6a2a"/><circle cx="676.3" cy="460.9" r="2.5" fill="#6a9a48"/><circle cx="697.1" cy="469.3" r="2.8" fill="#4a7a38"/><circle cx="686.0" cy="490.2" r="1.7" fill="#3a6a2a"/><circle cx="693.8" cy="485.3" r="2.5" fill="#3a6a2a"/><circle cx="674.3" cy="478.5" r="1.7" fill="#5a8a40"/><circle cx="672.2" cy="464.7" r="3.4" fill="#5a8a40"/><circle cx="658.9" cy="499.6" r="1.6" fill="#6a9a48"/><circle cx="700.7" cy="488.6" r="1.8" fill="#4a7a38"/><circle cx="683.4" cy="469.0" r="3.4" fill="#3a6a2a"/><circle cx="680.7" cy="448.7" r="1.5" fill="#5a8a40"/><circle cx="686.4" cy="472.1" r="3.4" fill="#3a6a2a"/><circle cx="705.2" cy="452.5" r="3.2" fill="#8ab868"/><circle cx="664.1" cy="458.3" r="2.0" fill="#6a9a48"/><circle cx="668.3" cy="473.1" r="3.2" fill="#8ab868"/><circle cx="701.0" cy="461.9" r="2.4" fill="#6a9a48"/><circle cx="695.6" cy="471.5" r="3.2" fill="#6a9a48"/><rect x="640" y="436" width="11" height="40" fill="#a87060"/>
<rect x="706" y="436" width="50" height="45" fill="#cc7878"/>
<ellipse cx="730" cy="474" rx="14" ry="5" fill="#e09088"/>
<rect x="706" y="478" width="50" height="30" fill="#8a7078"/>
<rect x="706" y="505" width="50" height="32" fill="#7c7884"/>
<rect x="705" y="535" width="50" height="32" fill="#8c8274"/>
<circle cx="713.5" cy="492.1" r="1.8" fill="#a8a0a0"/><circle cx="740.6" cy="528.7" r="2.2" fill="#9a90a0"/><circle cx="715.2" cy="517.9" r="2.1" fill="#5a5060"/><circle cx="721.7" cy="521.5" r="1.8" fill="#5a5060"/><circle cx="745.1" cy="484.5" r="1.3" fill="#5a5060"/><circle cx="740.4" cy="520.6" r="1.8" fill="#5a5060"/><circle cx="726.6" cy="529.0" r="1.8" fill="#9a90a0"/><circle cx="737.1" cy="516.2" r="1.8" fill="#a8a0a0"/><circle cx="729.3" cy="499.8" r="1.8" fill="#6a6070"/><circle cx="746.8" cy="551.4" r="1.3" fill="#a8a0a0"/><circle cx="713.8" cy="489.7" r="1.7" fill="#5a5060"/><circle cx="736.2" cy="514.3" r="1.3" fill="#6a6070"/><circle cx="740.9" cy="551.8" r="1.2" fill="#6a6070"/><circle cx="714.0" cy="550.6" r="2.5" fill="#9a90a0"/><circle cx="739.4" cy="487.5" r="2.3" fill="#9a90a0"/><circle cx="749.6" cy="546.6" r="1.2" fill="#a8a0a0"/><circle cx="749.8" cy="512.3" r="1.6" fill="#6a6070"/><circle cx="721.4" cy="537.8" r="1.0" fill="#a8a0a0"/><circle cx="726.5" cy="481.4" r="1.5" fill="#6a6070"/><circle cx="729.5" cy="485.1" r="2.5" fill="#9a90a0"/><circle cx="748.8" cy="488.4" r="1.4" fill="#5a5060"/><circle cx="746.0" cy="494.5" r="2.1" fill="#a8a0a0"/><circle cx="743.7" cy="534.1" r="2.4" fill="#a8a0a0"/><circle cx="714.3" cy="553.5" r="1.9" fill="#6a6070"/><circle cx="711.8" cy="484.6" r="2.0" fill="#a8a0a0"/><rect x="640" y="490" width="66" height="8" fill="#4a5250"/>
<rect x="664" y="494" width="38" height="26" fill="#9a9488"/>
<rect x="640" y="470" width="18" height="60" fill="#b88a7a"/>
<rect x="656" y="512" width="50" height="16" fill="#5a6450"/>
<ellipse cx="692" cy="522" rx="8" ry="5" fill="#3e6a34"/>
<rect x="640" y="505" width="10" height="25" fill="#d09484"/>
<rect x="640" y="527" width="56" height="19" fill="#f0e4b0"/>
<ellipse cx="693" cy="537" rx="6" ry="7" fill="#e8c898"/>
<ellipse cx="700" cy="541" rx="4" ry="4" fill="#3a90d8"/>
<rect x="696" y="544" width="10" height="22" fill="#e8e8f0"/>
<rect x="640" y="545" width="56" height="8" fill="#d8b8d0"/>
</g>
<g filter="url(#bl2)">
<path d="M649 486 H705" stroke="#c0c0b0" stroke-width="1"/>
<path d="M708 486 Q728 476 750 484 M708 492 Q728 482 750 490" stroke="#5a4a50" stroke-width="1" fill="none"/>
<path d="M712 482 V565 M740 484 V560" stroke="#6a6670" stroke-width="1"/>
<path d="M715 530 L718 545 M738 530 L742 545" stroke="#2a2a2a" stroke-width="1.4"/>
</g>
<rect x="644" y="441" width="3" height="62" fill="#f4f0f0"/><rect x="644" y="551" width="52" height="10" rx="4" fill="#262028"/>
<path d="M648 556 H652 M650 554 V558" stroke="#fff" stroke-width="1"/>
<ellipse cx="661" cy="556" rx="3" ry="1.5" fill="#a02020"/>
<rect x="644" y="565" width="112" height="7" fill="#22262a"/>
<rect x="750" y="441" width="6" height="131" fill="#1a2226"/>
</g></svg>
<div class="a" style="left:602px;top:322px;width:196px;height:119px;background:#00aac4"></div>
<div class="a" style="left:754px;top:419px;width:3px;height:3px;background:#d06060;border-radius:50%"></div>
<div class="a" style="left:600px;top:320px;width:4px;height:4px;border:1px solid #000;background:#fff"></div>
<svg class="a" style="left:0;top:123px" width="1180" height="21" viewBox="0 123 1180 21">
<path d="M1169.5 140V142 M1160.5 140V142 M1151.5 140V142 M1141.5 140V142 M1132.5 140V142 M1123.5 140V142 M1114.5 135V142 M1105.5 140V142 M1096.5 140V142 M1087.5 140V142 M1078.5 140V142 M1069.5 140V142 M1060.5 140V142 M1051.5 140V142 M1042.5 140V142 M1033.5 140V142 M1024.5 135V142 M1015.5 140V142 M1006.5 140V142 M997.5 140V142 M988.5 140V142 M979.5 140V142 M970.5 140V142 M960.5 140V142 M951.5 140V142 M942.5 140V142 M933.5 135V142 M924.5 140V142 M915.5 140V142 M906.5 140V142 M897.5 140V142 M888.5 140V142 M879.5 140V142 M870.5 140V142 M861.5 140V142 M852.5 140V142 M843.5 135V142 M834.5 140V142 M825.5 140V142 M816.5 140V142 M807.5 140V142 M798.5 140V142 M789.5 140V142 M779.5 140V142 M770.5 140V142 M761.5 140V142 M752.5 135V142 M743.5 140V142 M734.5 140V142 M725.5 140V142 M716.5 140V142 M707.5 140V142 M698.5 140V142 M689.5 140V142 M680.5 140V142 M671.5 140V142 M662.5 135V142 M653.5 140V142 M644.5 140V142 M635.5 140V142 M626.5 140V142 M617.5 140V142 M608.5 140V142 M598.5 140V142 M589.5 140V142 M580.5 140V142 M571.5 135V142 M562.5 140V142 M553.5 140V142 M544.5 140V142 M535.5 140V142 M526.5 140V142 M517.5 140V142 M508.5 140V142 M499.5 140V142 M490.5 140V142 M481.5 135V142 M472.5 140V142 M463.5 140V142 M454.5 140V142 M445.5 140V142 M436.5 140V142 M427.5 140V142 M417.5 140V142 M408.5 140V142 M399.5 140V142 M390.5 135V142 M381.5 140V142 M372.5 140V142 M363.5 140V142 M354.5 140V142 M345.5 140V142 M336.5 140V142 M327.5 140V142 M318.5 140V142 M309.5 140V142 M300.5 135V142 M291.5 140V142 M282.5 140V142 M273.5 140V142 M264.5 140V142 M255.5 140V142 M246.5 140V142 M236.5 140V142 M227.5 140V142 M218.5 140V142 M209.5 135V142 M200.5 140V142 M191.5 140V142 M182.5 140V142 M173.5 140V142 M164.5 140V142 M155.5 140V142 M146.5 140V142 M137.5 140V142 M128.5 140V142 M119.5 135V142 M110.5 140V142 M101.5 140V142 M92.5 140V142 M83.5 140V142 M74.5 140V142 M64.5 140V142 M55.5 140V142" stroke="#222" stroke-width="1"/>
<g font-family="Liberation Sans" font-size="9.5" fill="#111"><text x="1114.5" y="133.7" text-anchor="middle">1000</text><text x="1024.5" y="133.7" text-anchor="middle">800</text><text x="933.5" y="133.7" text-anchor="middle">600</text><text x="843.5" y="133.7" text-anchor="middle">400</text><text x="752.5" y="133.7" text-anchor="middle">200</text><text x="662.5" y="133.7" text-anchor="middle">0</text><text x="571.5" y="133.7" text-anchor="middle">200</text><text x="481.5" y="133.7" text-anchor="middle">400</text><text x="390.5" y="133.7" text-anchor="middle">600</text><text x="300.5" y="133.7" text-anchor="middle">800</text><text x="209.5" y="133.7" text-anchor="middle">1000</text><text x="119.5" y="133.7" text-anchor="middle">1200</text></g>
</svg>
<div class="a rt" style="left:1136px;top:125px">milimetry</div>
<div class="a" style="left:923px;top:126px;width:1px;height:16px;background:repeating-linear-gradient(#222 0 3px,transparent 3px 6px)"></div>
<svg class="a" style="left:34px;top:130px" width="12" height="12" viewBox="0 0 12 12">
<path d="M1 2.5H5 M2.5 1V5" stroke="#222" stroke-dasharray="1.5 1"/>
<path d="M3 3 L9 9" stroke="#222" stroke-width="1.2"/><path d="M10 10 L6 10 L10 6 Z" fill="#222"/>
</svg>
<svg class="a" style="left:0;top:0" width="50" height="703" viewBox="0 0 50 703">
<path d="M46 680.5H48 M46 671.5H48 M46 662.5H48 M46 652.5H48 M46 643.5H48 M46 634.5H48 M46 625.5H48 M46 616.5H48 M46 607.5H48 M46 598.5H48 M46 589.5H48 M46 580.5H48 M44 571.5H48 M46 562.5H48 M46 553.5H48 M46 544.5H48 M46 535.5H48 M46 526.5H48 M46 517.5H48 M46 508.5H48 M46 499.5H48 M46 490.5H48 M44 480.5H48 M46 471.5H48 M46 462.5H48 M46 453.5H48 M46 444.5H48 M46 435.5H48 M46 426.5H48 M46 417.5H48 M46 408.5H48 M46 399.5H48 M44 390.5H48 M46 381.5H48 M46 372.5H48 M46 363.5H48 M46 354.5H48 M46 345.5H48 M46 336.5H48 M46 327.5H48 M46 318.5H48 M46 309.5H48 M44 300.5H48 M46 290.5H48 M46 281.5H48 M46 272.5H48 M46 263.5H48 M46 254.5H48 M46 245.5H48 M46 236.5H48 M46 227.5H48 M46 218.5H48 M44 209.5H48 M46 200.5H48 M46 191.5H48 M46 182.5H48 M46 173.5H48 M46 164.5H48 M46 155.5H48 M46 146.5H48" stroke="#222" stroke-width="1"/>
<g font-family="Liberation Sans" font-size="9.5" fill="#111"><text transform="translate(43.3 571.5) rotate(-90)" text-anchor="middle">0</text><text transform="translate(43.3 480.5) rotate(-90)" text-anchor="middle">200</text><text transform="translate(43.3 390.5) rotate(-90)" text-anchor="middle">400</text><text transform="translate(43.3 300.5) rotate(-90)" text-anchor="middle">600</text><text transform="translate(43.3 209.5) rotate(-90)" text-anchor="middle">800</text></g>
<text transform="translate(43.3 702) rotate(-90)" font-family="Liberation Sans" font-size="10" fill="#111">milimetry</text>
<path d="M32 596.5H35 M38 596.5H41 M44 596.5H47" stroke="#222"/>
</svg>
<div id="vscroll" class="a"></div>
<div class="a" style="left:1166px;top:151px;width:0;height:0;border-left:4px solid transparent;border-right:4px solid transparent;border-bottom:4px solid #333"></div>\n<div class="a" style="left:1162px;top:143px;width:16px;height:1px;background:#a8a8a8"></div>\n<div class="a" style="left:1163px;top:163px;width:14px;height:503px;border:1px solid #a0a0a0;border-radius:1px;background:linear-gradient(90deg,#dcdcdc,#f4f4f4 40%,#e8e8e8 60%,#c8c8c8)"></div>\n<div class="a" style="left:1166px;top:409px;width:7px;height:7px;background:repeating-linear-gradient(#666 0 1px,transparent 1px 3px)"></div>\n<div class="a" style="left:1166px;top:675px;width:0;height:0;border-left:4px solid transparent;border-right:4px solid transparent;border-top:4px solid #333"></div>\n<div class="a" style="left:1162px;top:686px;width:16px;height:17px;background:#e6e6e6"></div>\n<svg class="a" style="left:1162px;top:686px" width="16" height="16" viewBox="0 0 16 16"><circle cx="6.5" cy="6.5" r="5" fill="none" stroke="#333" stroke-width="1.2"/><circle cx="6.5" cy="6.5" r="2" fill="none" stroke="#333"/><path d="M10 10 L14 14" stroke="#222" stroke-width="2"/></svg>
<div id="hnav" class="a"></div>
<svg class="a" style="left:52px;top:687px" width="11" height="13" viewBox="0 0 11 13"><path d="M0.5 0.5 H7 L10.5 4 V12.5 H0.5 Z" fill="#fff" stroke="#333"/><path d="M5.5 4 V10 M2.5 7 H8.5" stroke="#111" stroke-width="1.2"/></svg>\n<div class="a" style="left:71px;top:689px;width:1px;height:9px;background:#777"></div>\n<div class="a" style="left:73px;top:689px;width:0;height:0;border-top:4.5px solid transparent;border-bottom:4.5px solid transparent;border-right:6px solid #777"></div>\n<div class="a" style="left:89px;top:689px;width:0;height:0;border-top:4.5px solid transparent;border-bottom:4.5px solid transparent;border-right:6px solid #777"></div>\n<div class="a st" style="left:119px;top:687px;font-size:12px">1 z 1</div>\n<div class="a" style="left:171px;top:689px;width:0;height:0;border-top:4.5px solid transparent;border-bottom:4.5px solid transparent;border-left:6px solid #777"></div>\n<div class="a" style="left:186px;top:689px;width:0;height:0;border-top:4.5px solid transparent;border-bottom:4.5px solid transparent;border-left:6px solid #777"></div>\n<div class="a" style="left:192px;top:689px;width:1px;height:9px;background:#777"></div>\n<svg class="a" style="left:201px;top:687px" width="11" height="13" viewBox="0 0 11 13"><path d="M0.5 0.5 H7 L10.5 4 V12.5 H0.5 Z" fill="#fff" stroke="#333"/><path d="M5.5 4 V10 M2.5 7 H8.5" stroke="#111" stroke-width="1.2"/></svg>\n<svg class="a" style="left:216px;top:686px" width="82" height="17" viewBox="0 0 82 17"><defs><linearGradient id="tg" x1="0" y1="0" x2="0" y2="1"><stop offset="0" stop-color="#d8ecf8"/><stop offset="1" stop-color="#8ccaf0"/></linearGradient></defs><path d="M0.5 0 V16.5 H81 V9 L73 0.5" fill="url(#tg)" stroke="#7aaed0"/></svg>\n<div class="a st" style="left:231px;top:687px;font-size:12px">Strona 1</div>\n<div class="a" style="left:298px;top:686px;width:317px;height:17px;background:#f0f0f0;border-top:1px solid #a8a8a8"></div>\n<div class="a" style="left:614px;top:686px;width:1px;height:16px;background:#888"></div>\n<div class="a" style="left:610px;top:689px;width:2px;height:11px;background:repeating-linear-gradient(#aaa 0 1px,transparent 1px 3px)"></div>\n<div class="a" style="left:615px;top:686px;width:547px;height:17px;background:#f0f0f0"></div>\n<div class="a" style="left:621px;top:689px;width:0;height:0;border-top:4px solid transparent;border-bottom:4px solid transparent;border-right:4px solid #333"></div>\n<div class="a" style="left:634px;top:686px;width:508px;height:15px;border:1px solid #a0a0a0;border-radius:2px;background:linear-gradient(#f4f4f4,#e8e8e8 50%,#c8c8c8)"></div>\n<div class="a" style="left:884px;top:690px;width:7px;height:7px;background:repeating-linear-gradient(90deg,#555 0 1px,transparent 1px 3px)"></div>\n<div class="a" style="left:1151px;top:689px;width:0;height:0;border-top:4px solid transparent;border-bottom:4px solid transparent;border-left:4px solid #333"></div>
<div id="docker" class="a"></div>
<svg class="a" style="left:1185px;top:128px" width="12" height="10" viewBox="0 0 12 10"><path d="M5.5 1 L1.8 5 L5.5 9 M10.5 1 L6.8 5 L10.5 9" fill="none" stroke="#555" stroke-width="1.6"/></svg>
<div class="a" style="left:1181px;top:146px;width:25px;height:141px;background:#fafafa;border:1px solid #d8d8d8;border-right:none;border-radius:4px 0 0 4px"></div>
<svg class="a" style="left:1186px;top:151px" width="16" height="15" viewBox="0 0 16 15"><rect x="1.5" y="1.5" width="5" height="4" fill="#fff" stroke="#333"/><rect x="10.5" y="0.5" width="4" height="3" fill="#fff" stroke="#333"/><rect x="10.5" y="5.5" width="4" height="3" fill="#fff" stroke="#333"/><path d="M4 6 V13 H10 M4 9 H10 M7 2 H10" fill="none" stroke="#333" stroke-dasharray="1 1"/></svg>
<div class="a" style="left:1188px;top:170px;width:100px;height:14px;transform-origin:0 0;transform:translate(14px,0) rotate(90deg);font-size:11px;color:#000;white-space:nowrap;line-height:14px">Menedżer obiektów</div>
<svg class="a" style="left:1189px;top:274px" width="10" height="9" viewBox="0 0 10 9"><path d="M1 1 L9 8 M9 1 L1 8" stroke="#888" stroke-width="2.2"/></svg>
<div class="a" style="left:1182px;top:290px;width:21px;height:90px;background:#f0f0f0;border:1px solid #d0d0d0;border-radius:3px"></div>
<div class="a" style="left:1188px;top:315px;width:120px;height:14px;transform-origin:0 0;transform:translate(13px,0) rotate(90deg);font-size:11px;color:#555;white-space:nowrap;line-height:14px">Podpowiedzi</div>
<div class="a" style="left:1182px;top:380px;width:21px;height:62px;background:#f0f0f0;border:1px solid #d0d0d0;border-radius:3px"></div>
<div class="a" style="left:1188px;top:384px;width:120px;height:14px;transform-origin:0 0;transform:translate(13px,0) rotate(90deg);font-size:11px;color:#555;white-space:nowrap;line-height:14px">Resources</div>
<div class="a" style="left:1182px;top:442px;width:21px;height:100px;background:#f0f0f0;border:1px solid #d0d0d0;border-radius:3px"></div>
<div class="a" style="left:1188px;top:466px;width:120px;height:14px;transform-origin:0 0;transform:translate(13px,0) rotate(90deg);font-size:11px;color:#555;white-space:nowrap;line-height:14px">Transformacja</div>
<div class="a" style="left:1182px;top:542px;width:21px;height:62px;background:#f0f0f0;border:1px solid #d0d0d0;border-radius:3px"></div>
<div class="a" style="left:1188px;top:567px;width:120px;height:14px;transform-origin:0 0;transform:translate(13px,0) rotate(90deg);font-size:11px;color:#555;white-space:nowrap;line-height:14px">Głębia</div>
<svg class="a" style="left:1184px;top:293px" width="17" height="17" viewBox="0 0 17 17"><path d="M1 1 V12 L3.5 9.5 L6 14 L7.5 13 L5.5 8.5 H9 Z" fill="#fff" stroke="#555"/><text x="10" y="9" font-family="Liberation Sans" font-size="10" font-weight="bold" fill="#555">?</text></svg>
<svg class="a" style="left:1184px;top:445px" width="17" height="18" viewBox="0 0 17 18"><path d="M5.5 8 A5 5 0 1 0 11 15.5" fill="none" stroke="#333" stroke-width="1.6"/><path d="M2.5 6 L6.5 6.5 L5 10 Z" fill="#333"/><path d="M11 1 V9 M7 5 H15" stroke="#333" stroke-width="1.1"/><path d="M11 0 L9.3 2.3 H12.7 Z M11 10 L9.3 7.7 H12.7 Z M6 5 L8.3 3.3 V6.7 Z M16 5 L13.7 3.3 V6.7 Z" fill="#333"/></svg>
<svg class="a" style="left:1185px;top:546px" width="15" height="15" viewBox="0 0 15 15"><path d="M1.5 4.5 L4.5 1.5 H13.5 V10.5 L10.5 13.5 Z" fill="#888" stroke="#333"/><path d="M1.5 4.5 H10.5 V13.5 H1.5 Z" fill="#fff" stroke="#333"/><path d="M10.5 4.5 L13.5 1.5" stroke="#333"/></svg>
<div id="palette" class="a"></div>
<div class="a" style="left:1211px;top:127px;width:28px;height:2px;background:repeating-linear-gradient(90deg,#c4c4c4 0 2px,transparent 2px 4px)"></div>
<div class="a" style="left:1207px;top:132px;width:18px;height:18px;background:linear-gradient(#fafafa,#e0e0e0);border:1px solid #333"></div>
<div class="a" style="left:1213px;top:137px;width:0;height:0;border-top:4px solid transparent;border-bottom:4px solid transparent;border-left:5px solid #111"></div>
<div class="a" style="left:1224px;top:132px;width:18px;height:18px;background:#5cb8f0;border:1px solid #3a3a3a"></div>
<svg class="a" style="left:1207px;top:149px" width="18" height="18" viewBox="0 0 18 18"><rect x="0.5" y="0.5" width="17" height="17" fill="#fff" stroke="#333"/><rect x="2.5" y="2.5" width="13" height="13" fill="#fff" stroke="#111"/><path d="M2.5 2.5 L15.5 15.5 M15.5 2.5 L2.5 15.5" stroke="#111"/></svg>
<div class="a" style="left:1224px;top:149px;width:18px;height:18px;background:#8ca8c4;border:1px solid #3a3a3a"></div>
<div class="a" style="left:1207px;top:166px;width:18px;height:18px;background:#272320;border:1px solid #3a3a3a"></div>
<div class="a" style="left:1224px;top:166px;width:18px;height:18px;background:#7a8a98;border:1px solid #3a3a3a"></div>
<div class="a" style="left:1207px;top:183px;width:18px;height:18px;background:#3e3a38;border:1px solid #3a3a3a"></div>
<div class="a" style="left:1224px;top:183px;width:18px;height:18px;background:#646e78;border:1px solid #3a3a3a"></div>
<div class="a" style="left:1207px;top:200px;width:18px;height:18px;background:#524e4c;border:1px solid #3a3a3a"></div>
<div class="a" style="left:1224px;top:200px;width:18px;height:18px;background:#4a5058;border:1px solid #3a3a3a"></div>
<div class="a" style="left:1207px;top:217px;width:18px;height:18px;background:#666260;border:1px solid #3a3a3a"></div>
<div class="a" style="left:1224px;top:217px;width:18px;height:18px;background:#4a6468;border:1px solid #3a3a3a"></div>
<div class="a" style="left:1207px;top:234px;width:18px;height:18px;background:#7a7674;border:1px solid #3a3a3a"></div>
<div class="a" style="left:1224px;top:234px;width:18px;height:18px;background:#3a7270;border:1px solid #3a3a3a"></div>
<div class="a" style="left:1207px;top:251px;width:18px;height:18px;background:#8c8886;border:1px solid #3a3a3a"></div>
<div class="a" style="left:1224px;top:251px;width:18px;height:18px;background:#4a8480;border:1px solid #3a3a3a"></div>
<div class="a" style="left:1207px;top:268px;width:18px;height:18px;background:#9e9a98;border:1px solid #3a3a3a"></div>
<div class="a" style="left:1224px;top:268px;width:18px;height:18px;background:#229480;border:1px solid #3a3a3a"></div>
<div class="a" style="left:1207px;top:285px;width:18px;height:18px;background:#b0acaa;border:1px solid #3a3a3a"></div>
<div class="a" style="left:1224px;top:285px;width:18px;height:18px;background:#229c78;border:1px solid #3a3a3a"></div>
<div class="a" style="left:1207px;top:302px;width:18px;height:18px;background:#c4c0be;border:1px solid #3a3a3a"></div>
<div class="a" style="left:1224px;top:302px;width:18px;height:18px;background:#18aac4;border:1px solid #3a3a3a"></div>
<div class="a" style="left:1207px;top:319px;width:18px;height:18px;background:#dad8d6;border:1px solid #3a3a3a"></div>
<div class="a" style="left:1224px;top:319px;width:18px;height:18px;background:#2a92a4;border:1px solid #3a3a3a"></div>
<div class="a" style="left:1207px;top:336px;width:18px;height:18px;background:#ffffff;border:1px solid #3a3a3a"></div>
<div class="a" style="left:1224px;top:336px;width:18px;height:18px;background:#96a89e;border:1px solid #3a3a3a"></div>
<div class="a" style="left:1207px;top:353px;width:18px;height:18px;background:#2e1888;border:1px solid #3a3a3a"></div>
<div class="a" style="left:1224px;top:353px;width:18px;height:18px;background:#a8dcc8;border:1px solid #3a3a3a"></div>
<div class="a" style="left:1207px;top:370px;width:18px;height:18px;background:#1a88e0;border:1px solid #3a3a3a"></div>
<div class="a" style="left:1224px;top:370px;width:18px;height:18px;background:#62c0a0;border:1px solid #3a3a3a"></div>
<div class="a" style="left:1207px;top:387px;width:18px;height:18px;background:#109048;border:1px solid #3a3a3a"></div>
<div class="a" style="left:1224px;top:387px;width:18px;height:18px;background:#7a8a80;border:1px solid #3a3a3a"></div>
<div class="a" style="left:1207px;top:404px;width:18px;height:18px;background:#fff000;border:1px solid #3a3a3a"></div>
<div class="a" style="left:1224px;top:404px;width:18px;height:18px;background:#6e846e;border:1px solid #3a3a3a"></div>
<div class="a" style="left:1207px;top:421px;width:18px;height:18px;background:#f04010;border:1px solid #3a3a3a"></div>
<div class="a" style="left:1224px;top:421px;width:18px;height:18px;background:#90a870;border:1px solid #3a3a3a"></div>
<div class="a" style="left:1207px;top:438px;width:18px;height:18px;background:#e82a78;border:1px solid #3a3a3a"></div>
<div class="a" style="left:1224px;top:438px;width:18px;height:18px;background:#88a880;border:1px solid #3a3a3a"></div>
<div class="a" style="left:1207px;top:455px;width:18px;height:18px;background:#a03c70;border:1px solid #3a3a3a"></div>
<div class="a" style="left:1224px;top:455px;width:18px;height:18px;background:#70c040;border:1px solid #3a3a3a"></div>
<div class="a" style="left:1207px;top:472px;width:18px;height:18px;background:#f58010;border:1px solid #3a3a3a"></div>
<div class="a" style="left:1224px;top:472px;width:18px;height:18px;background:#a0d070;border:1px solid #3a3a3a"></div>
<div class="a" style="left:1207px;top:489px;width:18px;height:18px;background:#f8a09a;border:1px solid #3a3a3a"></div>
<div class="a" style="left:1224px;top:489px;width:18px;height:18px;background:#484440;border:1px solid #3a3a3a"></div>
<div class="a" style="left:1207px;top:506px;width:18px;height:18px;background:#7a6c62;border:1px solid #3a3a3a"></div>
<div class="a" style="left:1224px;top:506px;width:18px;height:18px;background:#6e6c62;border:1px solid #3a3a3a"></div>
<div class="a" style="left:1207px;top:523px;width:18px;height:18px;background:#b8b0d8;border:1px solid #3a3a3a"></div>
<div class="a" style="left:1224px;top:523px;width:18px;height:18px;background:#8c8c72;border:1px solid #3a3a3a"></div>
<div class="a" style="left:1207px;top:540px;width:18px;height:18px;background:#8878b8;border:1px solid #3a3a3a"></div>
<div class="a" style="left:1224px;top:540px;width:18px;height:18px;background:#909868;border:1px solid #3a3a3a"></div>
<div class="a" style="left:1207px;top:557px;width:18px;height:18px;background:#5a72b8;border:1px solid #3a3a3a"></div>
<div class="a" style="left:1224px;top:557px;width:18px;height:18px;background:#c0c060;border:1px solid #3a3a3a"></div>
<div class="a" style="left:1207px;top:574px;width:18px;height:18px;background:#6a52a0;border:1px solid #3a3a3a"></div>
<div class="a" style="left:1224px;top:574px;width:18px;height:18px;background:#f8f070;border:1px solid #3a3a3a"></div>
<div class="a" style="left:1207px;top:591px;width:18px;height:18px;background:#6e6284;border:1px solid #3a3a3a"></div>
<div class="a" style="left:1224px;top:591px;width:18px;height:18px;background:#fcf28c;border:1px solid #3a3a3a"></div>
<div class="a" style="left:1207px;top:608px;width:18px;height:18px;background:#3e4a72;border:1px solid #3a3a3a"></div>
<div class="a" style="left:1224px;top:608px;width:18px;height:18px;background:#fdf8b8;border:1px solid #3a3a3a"></div>
<div class="a" style="left:1207px;top:625px;width:18px;height:18px;background:#4a4868;border:1px solid #3a3a3a"></div>
<div class="a" style="left:1224px;top:625px;width:18px;height:18px;background:#a08c62;border:1px solid #3a3a3a"></div>
<div class="a" style="left:1207px;top:642px;width:18px;height:18px;background:#5a6480;border:1px solid #3a3a3a"></div>
<div class="a" style="left:1224px;top:642px;width:18px;height:18px;background:#c88858;border:1px solid #3a3a3a"></div>
<div class="a" style="left:1207px;top:659px;width:18px;height:18px;background:#0878d0;border:1px solid #3a3a3a"></div>
<div class="a" style="left:1224px;top:659px;width:18px;height:18px;background:#c8a060;border:1px solid #3a3a3a"></div>
<div class="a" style="left:1213px;top:681px;width:0;height:0;border-top:4px solid transparent;border-bottom:4px solid transparent;border-right:4px solid #333"></div>
<div class="a" style="left:1232px;top:681px;width:0;height:0;border-top:4px solid transparent;border-bottom:4px solid transparent;border-left:4px solid #333"></div>
<div id="status" class="a"></div>
<div class="a st" style="left:404px;top:710px">Zaznaczonych obiektów:&nbsp; 2 &nbsp;na Warstwa 1</div>
<div class="a st" style="left:4px;top:729px">( 578.282; -59.390 )</div>
<div class="a st" style="left:118px;top:729px;font-size:10.8px">Kliknij dwukrotnie obiekt, aby go obracać/pochylać; kliknięcie dwukrotne narzędzia powoduje zaznaczenie wszystkich obiektów; kliknięcie z przytrzy...</div>
<svg class="a" style="left:1020px;top:708px" width="17" height="16" viewBox="0 0 17 16"><path d="M7.5 1 L1.5 8 L7.5 14.5 L13.5 8 Z" fill="#fff" stroke="#555" stroke-width="1.3"/><path d="M2 8.5 L7.5 14 L13 8.5 Z" fill="#e8841c"/><path d="M13.5 8 V13" stroke="#c07010" stroke-width="1.6"/><path d="M7.5 1 V5" stroke="#444" stroke-width="1.5"/></svg>
<svg class="a" style="left:1041px;top:707px" width="18" height="18" viewBox="0 0 18 18"><rect x="0.5" y="0.5" width="17" height="17" fill="#fff" stroke="#888"/><path d="M1 1 L17 17" stroke="#c01818" stroke-width="1.6"/></svg>
<div class="a st" style="left:1062px;top:710px">Kolor wypełnienia</div>
<svg class="a" style="left:1024px;top:728px" width="10" height="16" viewBox="0 0 10 16"><path d="M3 1 H7 L9.5 9 L7 13 H3 L0.5 9 Z" fill="#f0f0f4" stroke="#555"/><path d="M5 5 V10" stroke="#555"/><rect x="2" y="13" width="6" height="3" fill="#444"/></svg>
<svg class="a" style="left:1041px;top:727px" width="18" height="18" viewBox="0 0 18 18"><rect x="0.5" y="0.5" width="17" height="17" fill="#fff" stroke="#888"/><path d="M1 1 L17 17 M17 1 L1 17" stroke="#111" stroke-width="1.2"/></svg>
<div class="a st" style="left:1062px;top:729px">Brak</div>
<div class="a" style="left:1230px;top:733px;width:10px;height:10px;background:radial-gradient(circle,#999 0.6px,transparent 0.8px) 0 0/3px 3px;clip-path:polygon(100% 0,100% 100%,0 100%)"></div>
<div id="rborder" class="a"></div>
<!-- red blob -->
<svg class="a" style="left:622px;top:110px" width="27" height="21" viewBox="0 0 27 21"><path d="M8 0.7 H19 Q22 0.7 24 3 L26 7 V13 L24 17 Q21 20 17 20 H10 Q6 20 3 17 L1 13 V8 L3 4 Q5 0.7 8 0.7 Z" fill="#c80202"/></svg>
</body></html>
